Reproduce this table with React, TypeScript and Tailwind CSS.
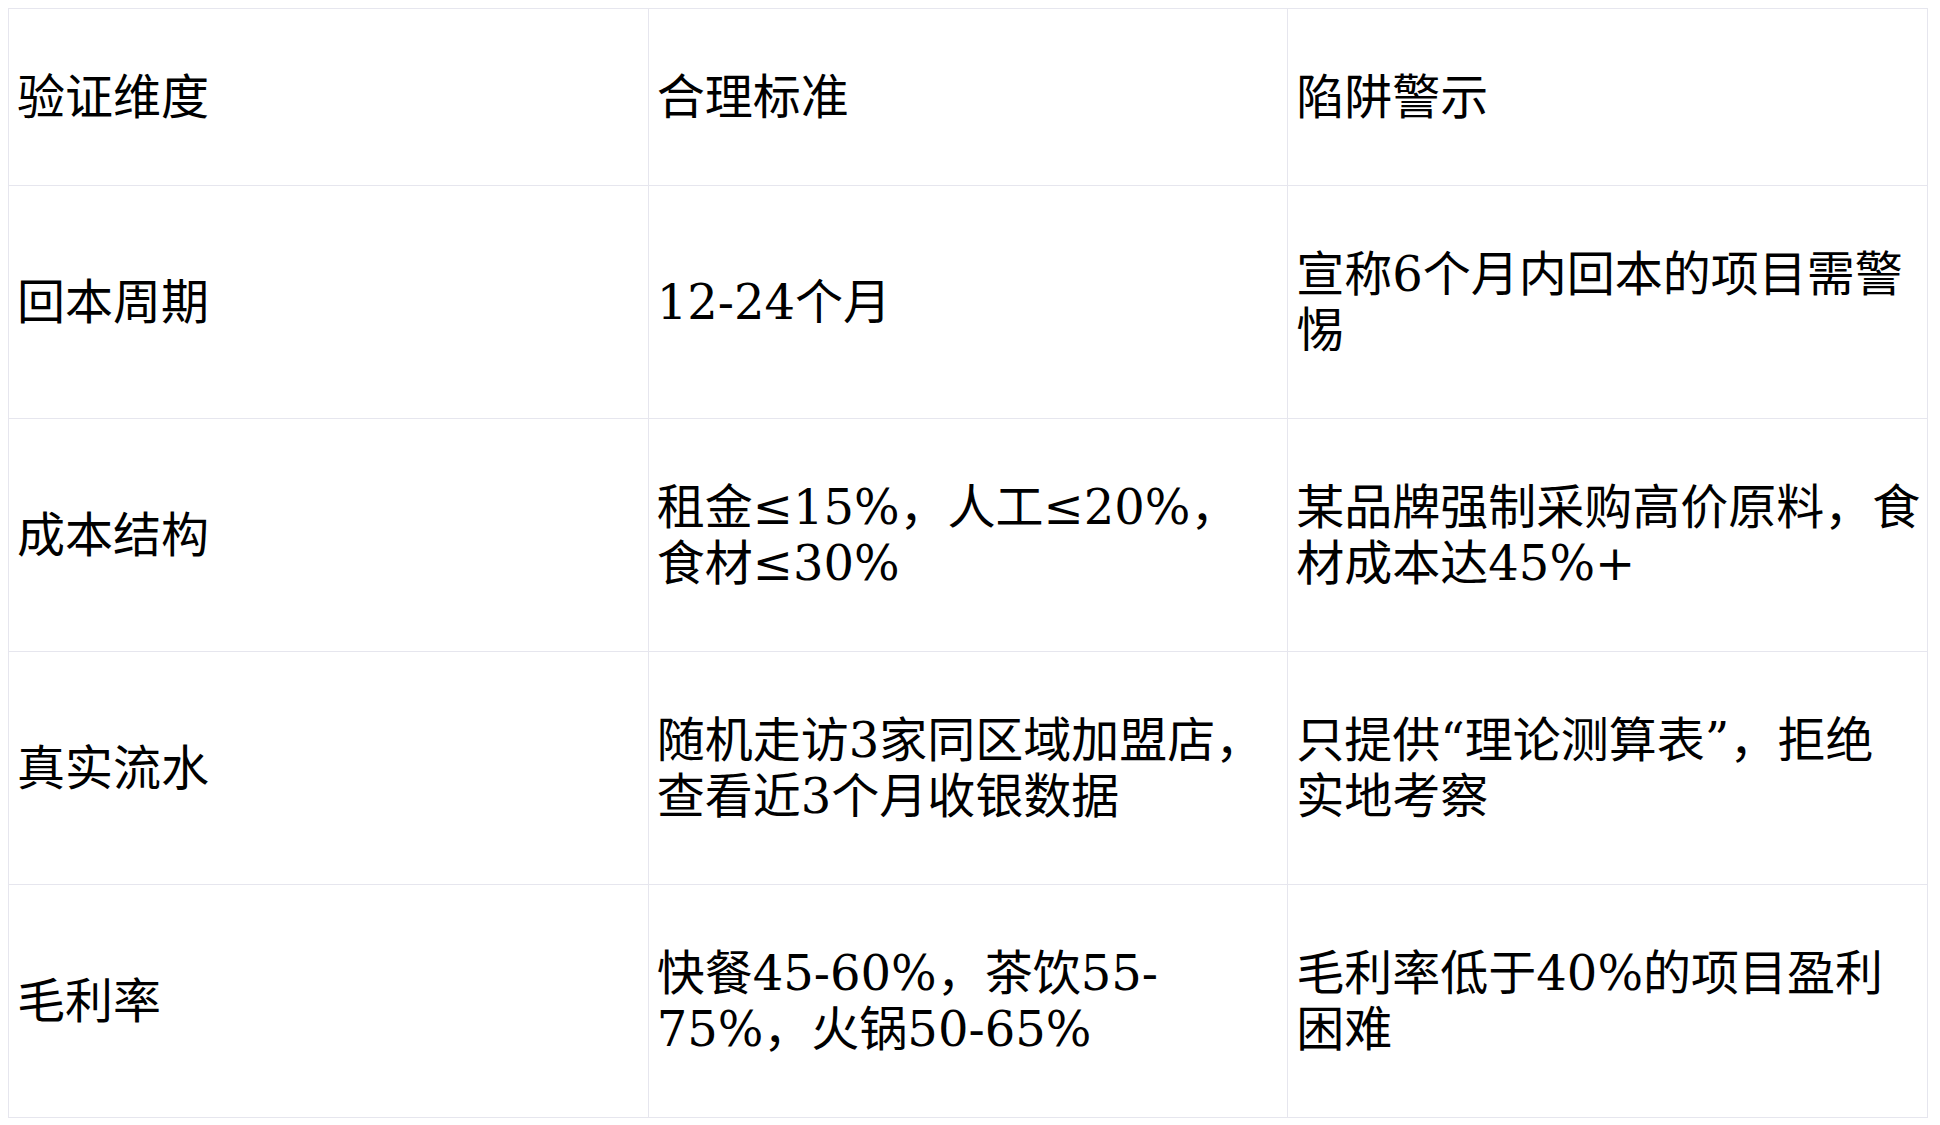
import React from 'react';

type Row = {
  dimension: string;
  standard: string;
  warning: string;
};

const rows: Row[] = [
  { dimension: '回本周期', standard: '12-24个月', warning: '宣称6个月内回本的项目需警惕' },
  { dimension: '成本结构', standard: '租金≤15%，人工≤20%，食材≤30%', warning: '某品牌强制采购高价原料，食材成本达45%+' },
  { dimension: '真实流水', standard: '随机走访3家同区域加盟店，查看近3个月收银数据', warning: '只提供“理论测算表”，拒绝实地考察' },
  { dimension: '毛利率', standard: '快餐45-60%，茶饮55-75%，火锅50-65%', warning: '毛利率低于40%的项目盈利困难' },
];

const cellClass = 'border border-[#e6e6ee] pl-2 pr-[6px] py-[60px] align-middle text-left font-normal';

const App: React.FC = () => {
  return (
    <div
      className="min-h-screen bg-white p-2 text-[48px] leading-[56px] text-black"
      style={{ fontFamily: '"DejaVu Serif", "Noto Sans CJK SC", serif' }}
    >
      <table className="w-[1920px] table-fixed border-collapse">
        <thead>
          <tr>
            <th className={cellClass}>验证维度</th>
            <th className={cellClass}>合理标准</th>
            <th className={cellClass}>陷阱警示</th>
          </tr>
        </thead>
        <tbody>
          {rows.map((row) => (
            <tr key={row.dimension}>
              <td className={cellClass}>{row.dimension}</td>
              <td className={cellClass}>{row.standard}</td>
              <td className={cellClass}>{row.warning}</td>
            </tr>
          ))}
        </tbody>
      </table>
    </div>
  );
};

export default App;
